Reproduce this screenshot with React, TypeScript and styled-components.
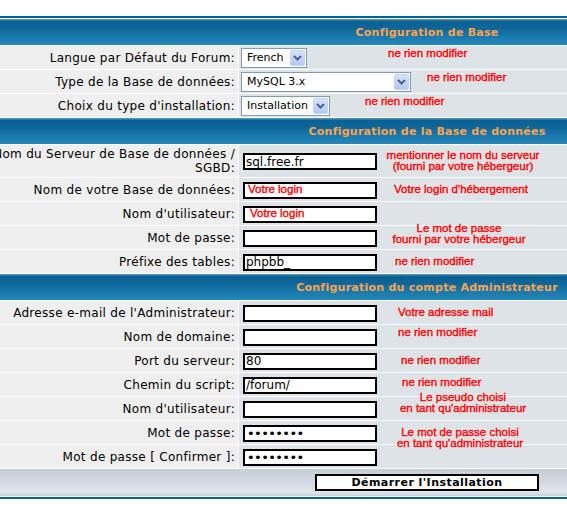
import styled, { createGlobalStyle } from "styled-components";

const GlobalStyle = createGlobalStyle`
  html, body {
    margin: 0;
    padding: 0;
    background: #ffffff;
  }
  body {
    font-family: "DejaVu Sans", Verdana, sans-serif;
  }
`;

const Page = styled.div`
  position: relative;
  width: 567px;
  height: 512px;
  overflow: hidden;
  padding-top: 16px;
  box-sizing: border-box;
`;

const Forumline = styled.form`
  width: 888px;
  margin: 0 0 0 -17px;
  box-sizing: border-box;
  border: 2px solid #006699;
  background: #ffffff;
  padding: 1px;
  display: grid;
  grid-template-columns: 252px 1fr;
  gap: 1px;
`;

const Th = styled.div`
  grid-column: 1 / -1;
  height: 26px;
  display: flex;
  align-items: center;
  justify-content: center;
  background: linear-gradient(
    to bottom,
    #4f92b9 0px,
    #4f92b9 1px,
    #0a6094 2px,
    #0c6698 9px,
    #187aad 18px,
    #2687b9 26px
  );
  color: #ffa34f;
  font-size: 11px;
  font-weight: bold;
  letter-spacing: 0.25px;
`;

const LabelCell = styled.div<{ $tall?: boolean }>`
  min-height: ${(p) => (p.$tall ? 32 : 23)}px;
  box-sizing: border-box;
  padding: 2px 3px 2px 4px;
  background: #efefef;
  display: flex;
  align-items: center;
  justify-content: flex-end;
  text-align: right;
  font-size: 12px;
  line-height: 14px;
  letter-spacing: 0.3px;
  color: #000000;
`;

const FieldCell = styled.div`
  box-sizing: border-box;
  padding: 0 2px;
  background: #dee3e7;
  display: flex;
  align-items: center;
`;

const TextInput = styled.input`
  width: 134px;
  height: 17px;
  box-sizing: border-box;
  margin: 1px 0 0 2px;
  padding: 0 1px;
  border: 2px solid #000000;
  background: #ffffff;
  font-family: "DejaVu Sans", Verdana, sans-serif;
  font-size: 12px;
  color: #000000;
  outline: none;

  &[type="password"] {
    font-size: 13px;
    letter-spacing: -0.6px;
    padding-left: 2px;
  }
`;

const SelectBox = styled.div<{ $w: number }>`
  display: inline-flex;
  align-items: center;
  width: ${(p) => p.$w}px;
  height: 20px;
  box-sizing: border-box;
  border: 1px solid #7f9db9;
  background: #ffffff;
  padding: 1px;
`;

const NativeSelect = styled.select`
  appearance: none;
  flex: 1;
  min-width: 0;
  height: 100%;
  border: 0;
  background: transparent;
  padding: 0 0 0 4px;
  font-family: "DejaVu Sans", Verdana, sans-serif;
  font-size: 11px;
  color: #000000;
  outline: none;
`;

const ArrowBox = styled.span`
  width: 15px;
  height: 16px;
  box-sizing: border-box;
  display: flex;
  align-items: center;
  justify-content: center;
  border: 1px solid #c3d3fb;
  border-radius: 2px;
  background: linear-gradient(to bottom, #d6e2fe, #b4c7f6);
`;

const CatBottom = styled.div`
  grid-column: 1 / -1;
  height: 27px;
  display: flex;
  align-items: center;
  justify-content: center;
  padding-bottom: 1px;
  box-sizing: border-box;
  background: linear-gradient(
    to bottom,
    #c5ced6 0%,
    #d1d8de 45%,
    #e1e6ea 85%,
    #c9d1d8 100%
  );
`;

const MainOption = styled.button`
  width: 224px;
  height: 17px;
  box-sizing: border-box;
  padding: 0;
  border: 2px solid #000000;
  background: #ffffff;
  font-family: "DejaVu Sans", Verdana, sans-serif;
  font-size: 11px;
  font-weight: bold;
  letter-spacing: 0.45px;
  line-height: 13px;
  color: #000000;
`;

const Note = styled.div<{ $left?: number; $center?: number; $top: number }>`
  position: absolute;
  top: ${(p) => p.$top}px;
  left: ${(p) => (p.$center !== undefined ? p.$center - 120 : p.$left)}px;
  width: ${(p) => (p.$center !== undefined ? "240px" : "auto")};
  text-align: ${(p) => (p.$center !== undefined ? "center" : "left")};
  white-space: nowrap;
  font-family: "Liberation Sans", Arial, sans-serif;
  font-size: 11.5px;
  line-height: 11px;
  color: #ff0000;
  -webkit-text-stroke: 0.35px #ff0000;
`;

function Chevron() {
  return (
    <svg width="9" height="6" viewBox="0 0 9 6">
      <polyline
        points="1,1 4.5,4.5 8,1"
        fill="none"
        stroke="#4d6185"
        strokeWidth="2"
      />
    </svg>
  );
}

function Select({ width, value }: { width: number; value: string }) {
  return (
    <SelectBox $w={width}>
      <NativeSelect defaultValue={value}>
        <option>{value}</option>
      </NativeSelect>
      <ArrowBox>
        <Chevron />
      </ArrowBox>
    </SelectBox>
  );
}

function Field({
  label,
  value,
  type = "text",
  tall,
}: {
  label: React.ReactNode;
  value?: string;
  type?: string;
  tall?: boolean;
}) {
  return (
    <>
      <LabelCell $tall={tall}>{label}</LabelCell>
      <FieldCell>
        <TextInput type={type} defaultValue={value} />
      </FieldCell>
    </>
  );
}

export default function App() {
  return (
    <Page>
      <GlobalStyle />
      <Forumline onSubmit={(e) => e.preventDefault()}>
        <Th>Configuration de Base</Th>
        <LabelCell>Langue par Défaut du Forum:</LabelCell>
        <FieldCell>
          <Select width={66} value="French" />
        </FieldCell>
        <LabelCell>Type de la Base de données:</LabelCell>
        <FieldCell>
          <Select width={170} value="MySQL 3.x" />
        </FieldCell>
        <LabelCell>Choix du type d'installation:</LabelCell>
        <FieldCell>
          <Select width={89} value="Installation" />
        </FieldCell>

        <Th>Configuration de la Base de données</Th>
        <Field
          tall
          label={
            <span>
              Nom du Serveur de Base de données /<br />
              SGBD:
            </span>
          }
          value="sql.free.fr"
        />
        <Field label="Nom de votre Base de données:" />
        <Field label="Nom d'utilisateur:" />
        <Field label="Mot de passe:" type="password" />
        <Field label="Préfixe des tables:" value="phpbb_" />

        <Th>Configuration du compte Administrateur</Th>
        <Field label="Adresse e-mail de l'Administrateur:" />
        <Field label="Nom de domaine:" />
        <Field label="Port du serveur:" value="80" />
        <Field label="Chemin du script:" value="/forum/" />
        <Field label="Nom d'utilisateur:" />
        <Field label="Mot de passe:" type="password" value="12345678" />
        <Field
          label="Mot de passe [ Confirmer ]:"
          type="password"
          value="12345678"
        />

        <CatBottom>
          <MainOption type="submit">Démarrer l'Installation</MainOption>
        </CatBottom>
      </Forumline>

      <Note $left={388} $top={48}>ne rien modifier</Note>
      <Note $left={427} $top={72}>ne rien modifier</Note>
      <Note $left={365} $top={96}>ne rien modifier</Note>
      <Note $center={463} $top={150}>
        mentionner le nom du serveur
        <br />
        (fourni par votre hébergeur)
      </Note>
      <Note $left={248} $top={184}>Votre login</Note>
      <Note $left={394} $top={184}>Votre login d'hébergement</Note>
      <Note $left={250} $top={208}>Votre login</Note>
      <Note $center={459} $top={223}>
        Le mot de passe
        <br />
        fourni par votre hébergeur
      </Note>
      <Note $left={395} $top={256}>ne rien modifier</Note>
      <Note $left={398} $top={307}>Votre adresse mail</Note>
      <Note $left={398} $top={327}>ne rien modifier</Note>
      <Note $left={401} $top={355}>ne rien modifier</Note>
      <Note $left={402} $top={377}>ne rien modifier</Note>
      <Note $center={463} $top={392}>
        Le pseudo choisi
        <br />
        en tant qu'administrateur
      </Note>
      <Note $center={460} $top={427}>
        Le mot de passe choisi
        <br />
        en tant qu'administrateur
      </Note>
    </Page>
  );
}
